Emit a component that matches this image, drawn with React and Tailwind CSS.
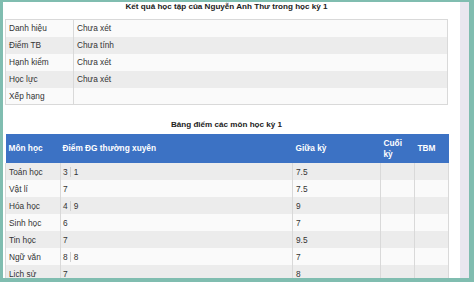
import React from "react";

const summary = [
  ["Danh hiệu", "Chưa xét"],
  ["Điểm TB", "Chưa tính"],
  ["Hạnh kiểm", "Chưa xét"],
  ["Học lực", "Chưa xét"],
  ["Xếp hạng", ""],
];

const grades = [
  { name: "Toán học", tx: ["3", "1"], gk: "7.5" },
  { name: "Vật lí", tx: ["7"], gk: "7.5" },
  { name: "Hóa học", tx: ["4", "9"], gk: "9" },
  { name: "Sinh học", tx: ["6"], gk: "7" },
  { name: "Tin học", tx: ["7"], gk: "9.5" },
  { name: "Ngữ văn", tx: ["8", "8"], gk: "7" },
  { name: "Lịch sử", tx: ["7"], gk: "8" },
];

export default function App() {
  return (
    <div
      className="w-[474px] h-[282px] overflow-hidden bg-[#80bdb0] pt-[2px] pl-[3px] pr-[5px] pb-[4px]"
      style={{ fontFamily: '"Liberation Sans", Arial, sans-serif' }}
    >
      <div className="flex h-full">
        <div className="flex-1 bg-white pl-[2px] overflow-hidden">
          <div className="w-[443px]">
            {/* Summary */}
            <div className="h-[17px] flex items-start justify-center text-[8.1px] leading-[9px] font-bold text-[#222]">
              Kết quả học tập của Nguyễn Anh Thư trong học kỳ 1
            </div>
            <table className="w-[443px] border-collapse border border-[#d9d9d9] text-[8.3px] text-[#333] table-fixed">
              <colgroup>
                <col className="w-[68px]" />
                <col />
              </colgroup>
              <tbody>
                {summary.map(([k, v], i) => (
                  <tr key={k} className={i % 2 ? "bg-[#ececec]" : "bg-[#fafafa]"}>
                    <td className="h-[17px] px-[3px] py-0 border-r border-[#d9d9d9] leading-[10px]">{k}</td>
                    <td className="h-[17px] px-[3px] py-0 leading-[10px]">{v}</td>
                  </tr>
                ))}
              </tbody>
            </table>

            {/* Grades */}
            <div className="h-[29px] flex items-center justify-center pt-[10px] text-[8.1px] leading-[10px] font-bold text-[#222]">
              Bảng điểm các môn học kỳ 1
            </div>
            <table className="w-[443px] border-collapse text-[8.3px] text-[#333] table-fixed">
              <colgroup>
                <col className="w-[55px]" />
                <col className="w-[232px]" />
                <col className="w-[88px]" />
                <col className="w-[34px]" />
                <col className="w-[34px]" />
              </colgroup>
              <thead>
                <tr className="bg-[#3c72c4] text-white font-bold text-left">
                  <th className="h-[29px] px-[3px] leading-[11px]">Môn học</th>
                  <th className="h-[29px] px-[2px] leading-[11px]">Điểm ĐG thường xuyên</th>
                  <th className="h-[29px] px-[3px] leading-[11px]">Giữa kỳ</th>
                  <th className="h-[29px] px-[3px] leading-[11px]">Cuối<br />kỳ</th>
                  <th className="h-[29px] px-[3px] leading-[11px]">TBM</th>
                </tr>
              </thead>
              <tbody>
                {grades.map((g, i) => (
                  <tr key={g.name} className={i % 2 ? "bg-[#fafafa]" : "bg-[#ececec]"}>
                    <td className="h-[17px] px-[3px] leading-[10px] border-l border-r border-[#d9d9d9]">{g.name}</td>
                    <td className="h-[17px] px-[2px] leading-[10px] border-r border-[#d9d9d9]">
                      {g.tx.map((s, j) => (
                        <span
                          key={j}
                          className={j < g.tx.length - 1 ? "inline-block pr-[2px] mr-[3px] border-r border-[#cfcfcf]" : "inline-block"}
                        >
                          {s}
                        </span>
                      ))}
                    </td>
                    <td className="h-[17px] px-[3px] leading-[10px] border-r border-[#d9d9d9]">{g.gk}</td>
                    <td className="h-[17px] px-[3px] border-r border-[#d9d9d9]"></td>
                    <td className="h-[17px] px-[3px] border-r border-[#d9d9d9]"></td>
                  </tr>
                ))}
              </tbody>
            </table>
          </div>
        </div>
        <div className="w-[9px] bg-[#e9e7ef]" />
      </div>
    </div>
  );
}
